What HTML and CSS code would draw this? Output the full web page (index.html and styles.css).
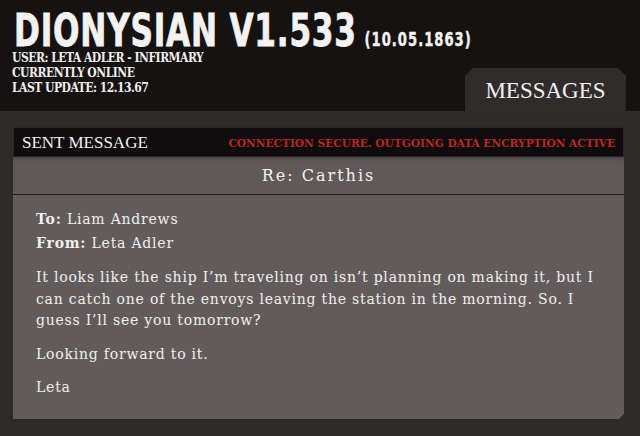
FILE: index.html
```html
<!DOCTYPE html>
<html>
<head>
<meta charset="utf-8">
<link rel="stylesheet" href="styles.css">
</head>
<body>
<header class="top">
  <div class="brand">
    <h1 class="title"><span class="title-text">DIONYSIAN V1.533<span class="date">(10.05.1863)</span></span></h1>
    <div class="meta">USER: LETA ADLER - INFIRMARY</div>
    <div class="meta">CURRENTLY ONLINE</div>
    <div class="meta">LAST UPDATE: 12.13.67</div>
  </div>
  <div class="tab">MESSAGES</div>
</header>
<main class="main">
  <section class="panel">
    <div class="panel-head">
      <span class="panel-title">SENT MESSAGE</span>
      <span class="status">CONNECTION SECURE. OUTGOING DATA ENCRYPTION ACTIVE</span>
    </div>
    <div class="subject">Re: Carthis</div>
    <div class="body">
      <p class="addr"><b>To:</b> Liam Andrews</p>
      <p class="addr"><b>From:</b> Leta Adler</p>
      <p class="para">It looks like the ship I’m traveling on isn’t planning on making it, but I can catch one of the envoys leaving the station in the morning. So. I guess I’ll see you tomorrow?</p>
      <p class="para">Looking forward to it.</p>
      <p class="para">Leta</p>
    </div>
  </section>
</main>
</body>
</html>
```
FILE: styles.css
```css
html, body {
  margin: 0;
  padding: 0;
}
body {
  width: 640px;
  height: 436px;
  overflow: hidden;
  background: #2e2b2a;
  font-family: "DejaVu Serif", serif;
  color: #f2efec;
}
.top {
  height: 111px;
  background: #151312;
  display: flex;
  align-items: flex-end;
  padding: 0 14px 0 12px;
  box-sizing: border-box;
}
.brand {
  flex: 1;
  min-width: 0;
  align-self: flex-start;
  padding-top: 13px;
}
.title {
  margin: 0 0 0 2px;
  font-family: "DejaVu Sans Condensed", "DejaVu Sans", sans-serif;
  font-weight: bold;
  font-size: 45px;
  line-height: 35px;
  height: 38px;
  white-space: nowrap;
  color: #f4f2f0;
}
.title-text {
  display: inline-block;
  transform: scaleX(0.77);
  transform-origin: 0 0;
  letter-spacing: 1px;
  -webkit-text-stroke: 0.8px #f4f2f0;
}
.date {
  font-size: 19px;
  letter-spacing: 1.3px;
  margin-left: 10px;
  -webkit-text-stroke: 0.4px #f4f2f0;
}
.meta {
  font-family: "DejaVu Serif Condensed", "DejaVu Serif", serif;
  font-weight: bold;
  font-size: 12px;
  letter-spacing: -0.5px;
  line-height: 15px;
  color: #f2efec;
}
.tab {
  flex-shrink: 0;
  width: 161px;
  height: 43px;
  background: #2f2c2b;
  clip-path: polygon(8px 0, calc(100% - 8px) 0, 100% 8px, 100% 100%, 0 100%, 0 8px);
  display: flex;
  align-items: center;
  justify-content: center;
  font-family: "Liberation Serif", serif;
  font-size: 23px;
  color: #f4f2f0;
  padding-top: 2px;
  box-sizing: border-box;
}
.main {
  padding: 16px 16px 0 13px;
}
.panel {
  width: 611px;
  height: 293px;
  background: #615c5b;
  display: flex;
  flex-direction: column;
  clip-path: polygon(0 0, 100% 0, 100% calc(100% - 6px), calc(100% - 6px) 100%, 0 100%);
  box-shadow: inset 0 -1px 0 #2a2727;
}
.panel-head {
  flex-shrink: 0;
  height: 30px;
  background: #0e0c0c;
  border: 1px solid #2a2626;
  box-sizing: border-box;
  display: flex;
  align-items: center;
  justify-content: space-between;
  padding: 0 8px 0 8px;
}
.panel-title {
  font-family: "Liberation Serif", serif;
  font-size: 17px;
  color: #f4f2f0;
  padding-top: 2px;
}
.status {
  font-family: "DejaVu Serif Condensed", "DejaVu Serif", serif;
  font-weight: bold;
  font-size: 11.8px;
  color: #b82629;
  padding-top: 1px;
}
.subject {
  flex-shrink: 0;
  height: 38px;
  background: #5f5a59;
  border-bottom: 1px solid #1e1b1b;
  box-sizing: border-box;
  display: flex;
  align-items: center;
  justify-content: center;
  font-size: 16px;
  letter-spacing: 2px;
  color: #f4f2f0;
  box-shadow: inset 0 4px 4px -3px rgba(0,0,0,0.35);
}
.body {
  padding: 12px 23px 0 23px;
  font-size: 14px;
  letter-spacing: 0.78px;
  line-height: 21.5px;
}
.body p {
  margin: 0;
}
.addr {
  line-height: 24px;
}
.body .para {
  margin-top: 12px;
}
```
